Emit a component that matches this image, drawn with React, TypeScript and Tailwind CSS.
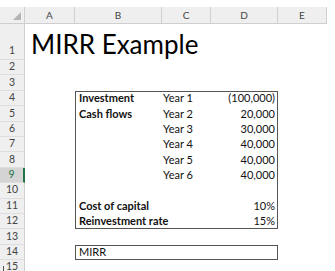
import React from "react";

const rowNums = Array.from({ length: 15 }, (_, i) => i + 1);
const cols = ["A", "B", "C", "D", "E"];

const rowStart = [
  "row-start-2", "row-start-3", "row-start-4", "row-start-5", "row-start-6",
  "row-start-7", "row-start-8", "row-start-9", "row-start-10", "row-start-11",
  "row-start-12", "row-start-13", "row-start-14", "row-start-15", "row-start-16",
];
const colStart = ["col-start-2", "col-start-3", "col-start-4", "col-start-5", "col-start-6"];

const years = [
  { y: "Year 1", v: "(100,000)" },
  { y: "Year 2", v: "20,000" },
  { y: "Year 3", v: "30,000" },
  { y: "Year 4", v: "40,000" },
  { y: "Year 5", v: "40,000" },
  { y: "Year 6", v: "40,000" },
];

export default function App() {
  return (
    <div className="w-[335px] h-[271px] overflow-hidden bg-white pt-[7px] text-[#111]" style={{ fontFamily: "Lato, 'Liberation Sans', sans-serif" }}>
      <div className="grid grid-cols-[25px_50px_87px_49px_67px_49px] grid-rows-[17px_36px_repeat(14,15.4px)] relative">
        {/* corner */}
        <div className="col-start-1 row-start-1 bg-[#efefef] border-r border-b border-[#cfcfcf] relative">
          <div className="absolute right-[3px] bottom-[3px] w-0 h-0 border-l-[8px] border-l-transparent border-b-[8px] border-b-[#b4b4b4]" />
        </div>
        {/* column headers */}
        {cols.map((c, i) => (
          <div key={c} className={`${colStart[i]} row-start-1 bg-[#efefef] border-r border-b border-[#cfcfcf] flex items-center justify-center text-[10px] text-[#444]`}>
            {c}
          </div>
        ))}
        {/* row headers */}
        {rowNums.map((n, i) => (
          <div
            key={n}
            className={`col-start-1 ${rowStart[i]} ${n === 9 ? "bg-[#d4d4d4] border-r-2 border-r-[#217346] text-[#217346]" : "bg-[#efefef] border-r border-r-[#cfcfcf] text-[#444]"} border-b border-b-[#dedede] flex items-center justify-center ${n === 1 ? "pt-[18px]" : ""} text-[10.5px]`}
          >
            {n}
          </div>
        ))}

        {/* title */}
        <div className="col-start-2 col-end-6 row-start-2 flex items-end pl-[6px] pb-[3px] text-[26px] leading-none whitespace-nowrap text-black">
          MIRR Example
        </div>

        {/* box */}
        <div className="col-start-3 col-end-6 row-start-5 row-end-14 border border-[#555]" />
        {/* MIRR box */}
        <div className="col-start-3 col-end-6 row-start-15 border border-[#555] flex items-center pl-[3px] text-[11px]">
          MIRR
        </div>

        <div className="col-start-3 row-start-5 flex items-center pl-[4px] text-[11px] font-bold">Investment</div>
        <div className="col-start-3 row-start-6 flex items-center pl-[4px] text-[11px] font-bold">Cash flows</div>
        {years.map((r, i) => (
          <React.Fragment key={r.y}>
            <div className={`col-start-4 ${rowStart[i + 3]} flex items-center pl-[1px] text-[11px] whitespace-nowrap`}>{r.y}</div>
            <div className={`col-start-5 ${rowStart[i + 3]} flex items-center justify-end pr-[3px] text-[11px]`}>{r.v}</div>
          </React.Fragment>
        ))}
        <div className="col-start-3 col-end-5 row-start-12 flex items-center pl-[4px] text-[11px] font-bold whitespace-nowrap">Cost of capital</div>
        <div className="col-start-5 row-start-12 flex items-center justify-end pr-[3px] text-[11px]">10%</div>
        <div className="col-start-3 col-end-5 row-start-13 flex items-center pl-[4px] text-[11px] font-bold whitespace-nowrap">Reinvestment rate</div>
        <div className="col-start-5 row-start-13 flex items-center justify-end pr-[3px] text-[11px]">15%</div>

        {/* cursor mark */}
        <div className="absolute left-[3px] top-[259px] w-px h-[7px] bg-[#555]" />
      </div>
    </div>
  );
}
